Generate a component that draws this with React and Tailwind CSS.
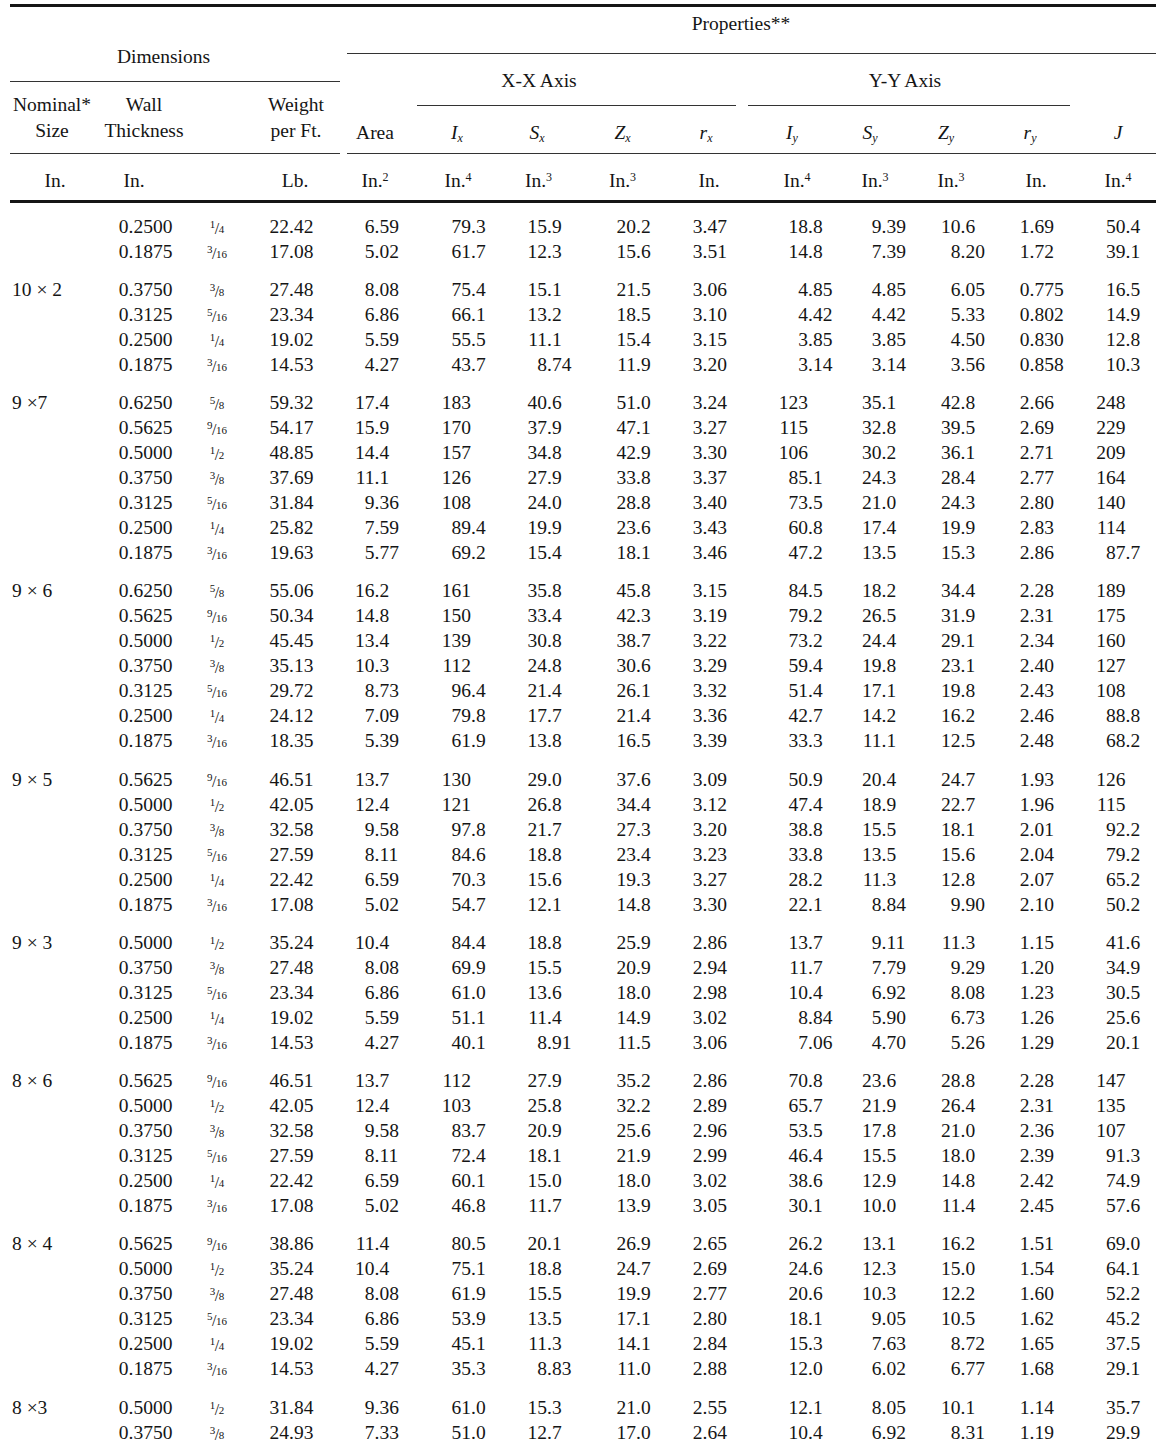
const GRID =
  "grid grid-cols-[90px_100px_50px_90px_7px_70px_80px_83px_85px_71px_12px_90px_74px_78px_80px_86px]";

const XW = ["w-[27.5px]", "w-[54px]", "w-[50px]", "w-[56px]", "w-[37.5px]"];
const YW = ["w-[60px]", "w-[43.5px]", "w-[48.5px]", "w-[39.5px]", "w-[55.5px]"];

const groups = [
  {
    size: "",
    rows: [
      "0.2500 1/4 22.42 6.59 79.3 15.9 20.2 3.47 18.8 9.39 10.6 1.69 50.4",
      "0.1875 3/16 17.08 5.02 61.7 12.3 15.6 3.51 14.8 7.39 8.20 1.72 39.1",
    ],
  },
  {
    size: "10 × 2",
    rows: [
      "0.3750 3/8 27.48 8.08 75.4 15.1 21.5 3.06 4.85 4.85 6.05 0.775 16.5",
      "0.3125 5/16 23.34 6.86 66.1 13.2 18.5 3.10 4.42 4.42 5.33 0.802 14.9",
      "0.2500 1/4 19.02 5.59 55.5 11.1 15.4 3.15 3.85 3.85 4.50 0.830 12.8",
      "0.1875 3/16 14.53 4.27 43.7 8.74 11.9 3.20 3.14 3.14 3.56 0.858 10.3",
    ],
  },
  {
    size: "9 ×7",
    rows: [
      "0.6250 5/8 59.32 17.4 183 40.6 51.0 3.24 123 35.1 42.8 2.66 248",
      "0.5625 9/16 54.17 15.9 170 37.9 47.1 3.27 115 32.8 39.5 2.69 229",
      "0.5000 1/2 48.85 14.4 157 34.8 42.9 3.30 106 30.2 36.1 2.71 209",
      "0.3750 3/8 37.69 11.1 126 27.9 33.8 3.37 85.1 24.3 28.4 2.77 164",
      "0.3125 5/16 31.84 9.36 108 24.0 28.8 3.40 73.5 21.0 24.3 2.80 140",
      "0.2500 1/4 25.82 7.59 89.4 19.9 23.6 3.43 60.8 17.4 19.9 2.83 114",
      "0.1875 3/16 19.63 5.77 69.2 15.4 18.1 3.46 47.2 13.5 15.3 2.86 87.7",
    ],
  },
  {
    size: "9 × 6",
    rows: [
      "0.6250 5/8 55.06 16.2 161 35.8 45.8 3.15 84.5 18.2 34.4 2.28 189",
      "0.5625 9/16 50.34 14.8 150 33.4 42.3 3.19 79.2 26.5 31.9 2.31 175",
      "0.5000 1/2 45.45 13.4 139 30.8 38.7 3.22 73.2 24.4 29.1 2.34 160",
      "0.3750 3/8 35.13 10.3 112 24.8 30.6 3.29 59.4 19.8 23.1 2.40 127",
      "0.3125 5/16 29.72 8.73 96.4 21.4 26.1 3.32 51.4 17.1 19.8 2.43 108",
      "0.2500 1/4 24.12 7.09 79.8 17.7 21.4 3.36 42.7 14.2 16.2 2.46 88.8",
      "0.1875 3/16 18.35 5.39 61.9 13.8 16.5 3.39 33.3 11.1 12.5 2.48 68.2",
    ],
  },
  {
    size: "9 × 5",
    rows: [
      "0.5625 9/16 46.51 13.7 130 29.0 37.6 3.09 50.9 20.4 24.7 1.93 126",
      "0.5000 1/2 42.05 12.4 121 26.8 34.4 3.12 47.4 18.9 22.7 1.96 115",
      "0.3750 3/8 32.58 9.58 97.8 21.7 27.3 3.20 38.8 15.5 18.1 2.01 92.2",
      "0.3125 5/16 27.59 8.11 84.6 18.8 23.4 3.23 33.8 13.5 15.6 2.04 79.2",
      "0.2500 1/4 22.42 6.59 70.3 15.6 19.3 3.27 28.2 11.3 12.8 2.07 65.2",
      "0.1875 3/16 17.08 5.02 54.7 12.1 14.8 3.30 22.1 8.84 9.90 2.10 50.2",
    ],
  },
  {
    size: "9 × 3",
    rows: [
      "0.5000 1/2 35.24 10.4 84.4 18.8 25.9 2.86 13.7 9.11 11.3 1.15 41.6",
      "0.3750 3/8 27.48 8.08 69.9 15.5 20.9 2.94 11.7 7.79 9.29 1.20 34.9",
      "0.3125 5/16 23.34 6.86 61.0 13.6 18.0 2.98 10.4 6.92 8.08 1.23 30.5",
      "0.2500 1/4 19.02 5.59 51.1 11.4 14.9 3.02 8.84 5.90 6.73 1.26 25.6",
      "0.1875 3/16 14.53 4.27 40.1 8.91 11.5 3.06 7.06 4.70 5.26 1.29 20.1",
    ],
  },
  {
    size: "8 × 6",
    rows: [
      "0.5625 9/16 46.51 13.7 112 27.9 35.2 2.86 70.8 23.6 28.8 2.28 147",
      "0.5000 1/2 42.05 12.4 103 25.8 32.2 2.89 65.7 21.9 26.4 2.31 135",
      "0.3750 3/8 32.58 9.58 83.7 20.9 25.6 2.96 53.5 17.8 21.0 2.36 107",
      "0.3125 5/16 27.59 8.11 72.4 18.1 21.9 2.99 46.4 15.5 18.0 2.39 91.3",
      "0.2500 1/4 22.42 6.59 60.1 15.0 18.0 3.02 38.6 12.9 14.8 2.42 74.9",
      "0.1875 3/16 17.08 5.02 46.8 11.7 13.9 3.05 30.1 10.0 11.4 2.45 57.6",
    ],
  },
  {
    size: "8 × 4",
    rows: [
      "0.5625 9/16 38.86 11.4 80.5 20.1 26.9 2.65 26.2 13.1 16.2 1.51 69.0",
      "0.5000 1/2 35.24 10.4 75.1 18.8 24.7 2.69 24.6 12.3 15.0 1.54 64.1",
      "0.3750 3/8 27.48 8.08 61.9 15.5 19.9 2.77 20.6 10.3 12.2 1.60 52.2",
      "0.3125 5/16 23.34 6.86 53.9 13.5 17.1 2.80 18.1 9.05 10.5 1.62 45.2",
      "0.2500 1/4 19.02 5.59 45.1 11.3 14.1 2.84 15.3 7.63 8.72 1.65 37.5",
      "0.1875 3/16 14.53 4.27 35.3 8.83 11.0 2.88 12.0 6.02 6.77 1.68 29.1",
    ],
  },
  {
    size: "8 ×3",
    rows: [
      "0.5000 1/2 31.84 9.36 61.0 15.3 21.0 2.55 12.1 8.05 10.1 1.14 35.7",
      "0.3750 3/8 24.93 7.33 51.0 12.7 17.0 2.64 10.4 6.92 8.31 1.19 29.9",
    ],
  },
];

// decimal-aligned number: integer part sits in a fixed box, the rest hangs off it
function Num({ v, w }) {
  const [int, dec] = v.split(".");
  return (
    <div className="flex whitespace-nowrap">
      <span className={`${w} shrink-0 text-right`}>{int}</span>
      {dec !== undefined && <span>.{dec}</span>}
    </div>
  );
}

function Frac({ f }) {
  const [n, d] = f.split("/");
  return (
    <span className="text-[11px] whitespace-nowrap">
      <span className="relative -top-[5px]">{n}</span>
      <span className="text-[16px] -mx-[0.5px] relative top-[1px]">/</span>
      <span>{d}</span>
    </span>
  );
}

function Sym({ s, sub }) {
  return (
    <span className="italic">
      {s}
      {sub && <sub className="text-[12px]">{sub}</sub>}
    </span>
  );
}

function Unit({ p }) {
  return (
    <span>
      In.{p && <sup className="text-[12px]">{p}</sup>}
    </span>
  );
}

function Row({ size, line }) {
  const c = line.split(" ");
  return (
    <div className={`${GRID} h-[25px] leading-[25px]`}>
      <div className="pl-[2px] whitespace-pre">{size}</div>
      <Num v={c[0]} w="w-[28.5px]" />
      <div className="text-center pr-[16px]">
        <Frac f={c[1]} />
      </div>
      <Num v={c[2]} w="w-[39px]" />
      <div />
      {c.slice(3, 8).map((v, i) => (
        <Num key={i} v={v} w={XW[i]} />
      ))}
      <div />
      {c.slice(8, 13).map((v, i) => (
        <Num key={i} v={v} w={YW[i]} />
      ))}
    </div>
  );
}

export default function App() {
  return (
    <div className="bg-white text-[#151515] font-['Liberation_Serif','Times_New_Roman',serif] text-[19.5px] pt-[4px]">
      <div className="ml-[10px] w-[1146px]">
        <div className="h-[3px] bg-[#151515]" />

        {/* header */}
        <div className="flex gap-[7px]">
          <div className="w-[330px]">
            <div className="h-[75px] border-b border-[#333] flex items-end justify-center pb-[12px] pr-[23px] leading-[25px]">
              Dimensions
            </div>
            <div className="grid grid-cols-[90px_100px_50px_90px] h-[72px] border-b border-[#333] py-[10px] leading-[25.5px]">
              <div className="text-center pr-[6px]">
                Nominal*
                <br />
                Size
              </div>
              <div className="text-center pr-[12px]">
                Wall
                <br />
                Thickness
              </div>
              <div />
              <div className="text-center pl-[2px]">
                Weight
                <br />
                per Ft.
              </div>
            </div>
          </div>

          <div className="w-[809px]">
            <div className="h-[47px] border-b border-[#333] text-center pt-[4px] pr-[21px] leading-[25px]">
              Properties**
            </div>
            <div className="grid grid-cols-[70px_80px_83px_85px_71px_12px_90px_74px_78px_80px_86px] h-[52px] leading-[25px]">
              <div />
              <div className="col-span-4 border-b border-[#333] text-center pt-[13.5px] pr-[75px]">
                X-X Axis
              </div>
              <div />
              <div className="col-span-4 border-b border-[#333] text-center pt-[13.5px] pr-[8px]">
                Y-Y Axis
              </div>
              <div />
            </div>
            <div className="grid grid-cols-[70px_80px_83px_85px_71px_12px_90px_74px_78px_80px_86px] h-[48px] border-b border-[#333] pt-[13.5px] leading-[25px] text-center">
              <div className="pr-[14px]">Area</div>
              <div><Sym s="I" sub="x" /></div>
              <div className="pr-[3px]"><Sym s="S" sub="x" /></div>
              <div><Sym s="Z" sub="x" /></div>
              <div className="pl-[11px]"><Sym s="r" sub="x" /></div>
              <div />
              <div className="pr-[2px]"><Sym s="I" sub="y" /></div>
              <div className="pr-[10px]"><Sym s="S" sub="y" /></div>
              <div className="pr-[10px]"><Sym s="Z" sub="y" /></div>
              <div><Sym s="r" sub="y" /></div>
              <div className="pl-[10px]"><Sym s="J" /></div>
            </div>
          </div>
        </div>

        {/* units */}
        <div className={`${GRID} h-[46px] pt-[13.5px] leading-[25px] text-center`}>
          <div><Unit /></div>
          <div className="pr-[32px]"><Unit /></div>
          <div />
          <div>Lb.</div>
          <div />
          <div className="pr-[14px]"><Unit p="2" /></div>
          <div className="pl-[2px]"><Unit p="4" /></div>
          <div><Unit p="3" /></div>
          <div><Unit p="3" /></div>
          <div className="pl-[17px]"><Unit /></div>
          <div />
          <div className="pl-[8px]"><Unit p="4" /></div>
          <div><Unit p="3" /></div>
          <div><Unit p="3" /></div>
          <div className="pl-[12px]"><Unit /></div>
          <div className="pl-[10px]"><Unit p="4" /></div>
        </div>

        <div className="h-[3px] bg-[#151515]" />

        {/* body */}
        <div className="pt-[10.5px] flex flex-col gap-[13.25px]">
          {groups.map((g, gi) => (
            <div key={gi}>
              {g.rows.map((r, ri) => (
                <Row key={ri} size={ri === 0 ? g.size : ""} line={r} />
              ))}
            </div>
          ))}
        </div>
      </div>
    </div>
  );
}
